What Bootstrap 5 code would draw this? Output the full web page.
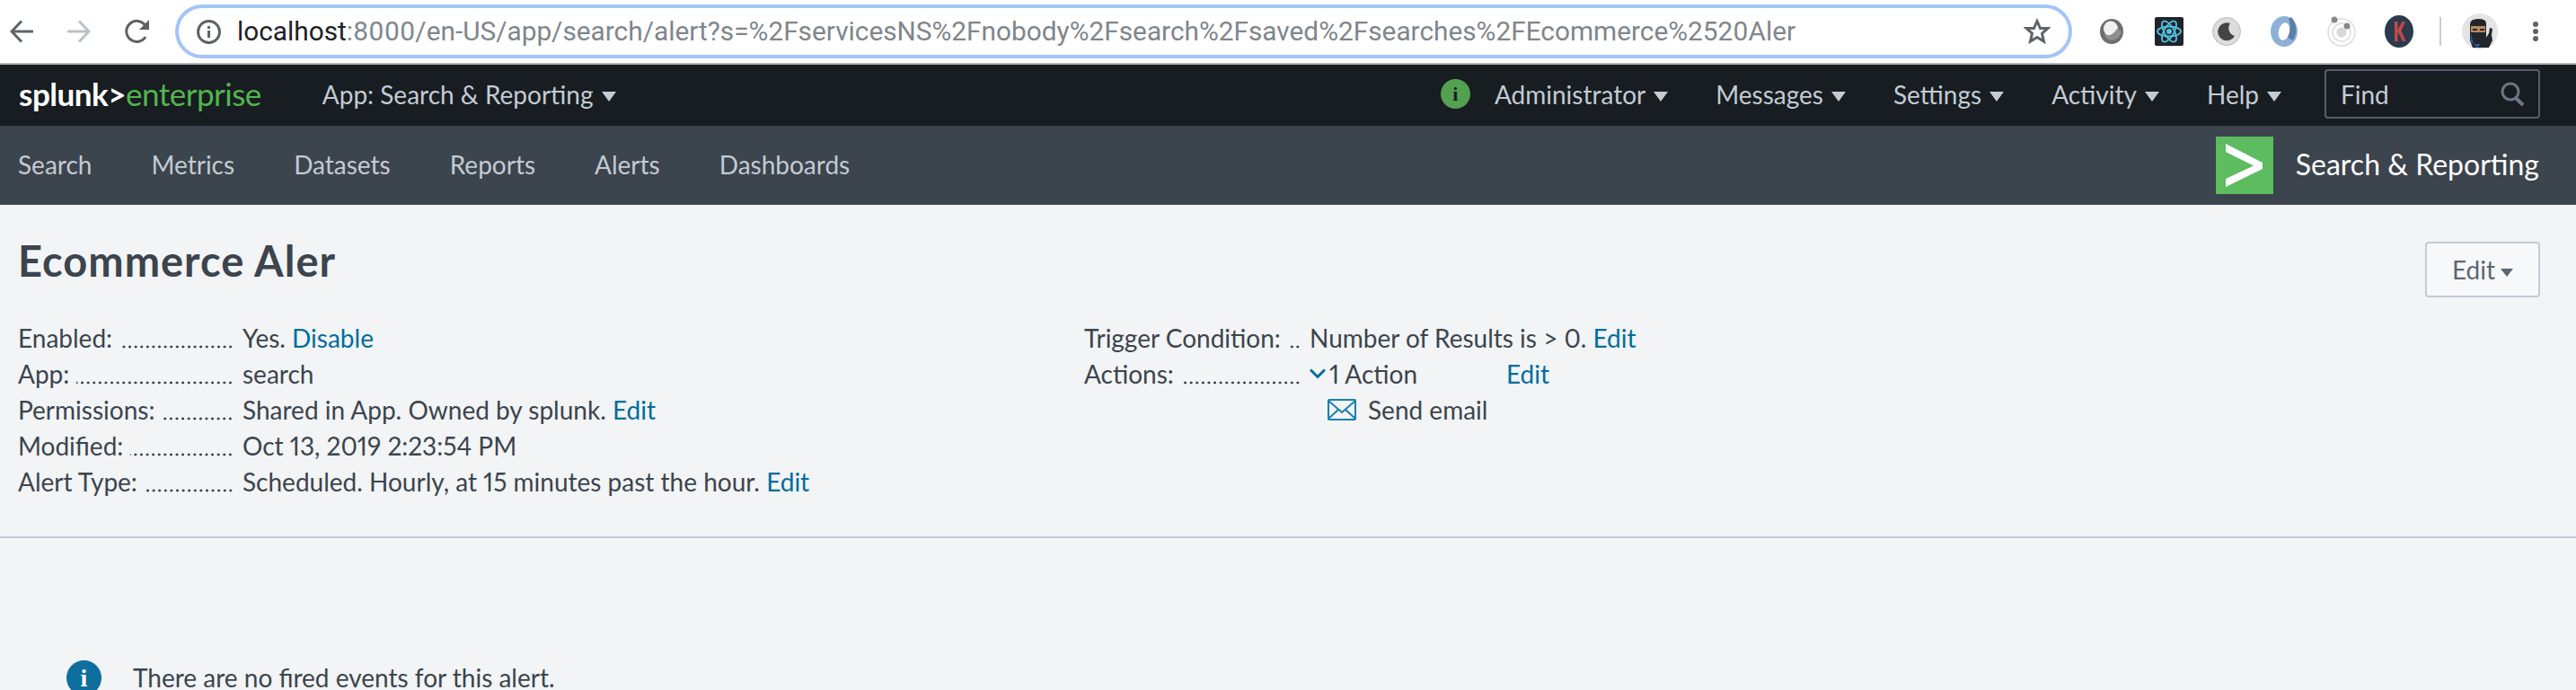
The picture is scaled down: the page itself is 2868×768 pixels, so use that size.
<!DOCTYPE html>
<html lang="en">
<head>
  <meta charset="UTF-8">
  <meta name="viewport" content="width=device-width, initial-scale=1">
  <title>Ecommerce Aler</title>
  <link href="https://cdn.jsdelivr.net/npm/bootstrap@5.3.3/dist/css/bootstrap.min.css" rel="stylesheet">
  <style>
    html, body { height: 100%; }
    body {
      background: #f2f4f5;
      color: #3c444d;
      font-family: "Lato", "Liberation Sans", sans-serif;
      font-size: 28px;
      line-height: 40px;
      font-variant-numeric: proportional-nums;
      overflow: hidden;
    }
    svg { display: block; flex: none; }
    a { text-decoration: none; }

    /* browser chrome */
    .chrome-bar {
      height: 72px;
      background: #fff;
      border-bottom: 2px solid #b4b6b8;
      padding-left: 11px;
    }
    .chrome-nav { width: 184px; gap: 38px; }
    .url-box {
      width: 2112px;
      height: 60px;
      border: 4px solid #a3c5f8;
      border-radius: 30px;
      padding: 0 20px;
      margin-right: 28px;
      font-family: "Roboto", sans-serif;
      font-size: 29.8px;
      color: #80868b;
      white-space: nowrap;
    }
    .url-box b { font-weight: 400; color: #202124; }
    .url-text { margin-left: 18px; flex: 1; overflow: hidden; }
    .ext-group { gap: 32px; }
    .ext-sep { width: 2px; height: 32px; background: #ccc; margin: 0 -9px 0 -3px; }
    .ext-more { margin-left: 6px; }

    /* splunk top bar */
    .top-bar {
      height: 68px;
      background: #171d21;
      padding: 0 40px 3px 21px;
      flex-wrap: nowrap;
    }
    .brand-text {
      font-size: 35px;
      letter-spacing: -.5px;
      color: #53b54f;
      margin-right: 68px;
      padding: 0;
      line-height: 65px;
    }
    .brand-text b { color: #fff; font-weight: 700; }
    .top-link {
      color: #c3cbd4;
      padding: 0;
      margin-left: 53px;
    }
    .top-link:hover { color: #fff; }
    .top-link.dropdown-toggle::after {
      border-top: 11px solid;
      border-left: 8px solid transparent;
      border-right: 8px solid transparent;
      border-bottom: 0;
      margin-left: 9px;
      vertical-align: 3px;
    }
    .app-link { margin-left: 0; }
    .status-dot {
      width: 33px;
      height: 33px;
      border-radius: 50%;
      background: #53a051;
      color: #171d21;
      font-family: "Liberation Serif", serif;
      font-weight: 700;
      font-size: 22px;
      line-height: 33px;
      text-align: center;
      margin-right: -26px;
    }
    .find-box {
      width: 240px;
      height: 55px;
      margin-left: 48px;
      border: 2px solid #56606b;
      border-radius: 4px;
      padding: 0 14px 0 16px;
      color: #c3cbd4;
    }

    /* app bar */
    .app-bar {
      height: 88px;
      background: #3c444d;
      padding: 0 41px 0 20px;
    }
    .app-menu { gap: 66px; margin-bottom: 3px; }
    .app-menu .nav-link { color: #c3cbd4; padding: 0; }
    .app-logo {
      width: 64px;
      height: 64px;
      background: #5cbc5f;
      margin-right: 25px;
    }
    .app-title { color: #fff; font-size: 32px; margin-bottom: 3px; }

    /* alert page */
    .alert-head { padding: 0 40px 0 20px; }
    .alert-title {
      font-size: 47px;
      font-weight: 700;
      letter-spacing: 1px;
      line-height: 60px;
      margin: 32px 0 36px;
      color: #3c444d;
    }
    .edit-btn {
      width: 128px;
      height: 62px;
      margin-top: 41px;
      padding: 0;
      font-size: 28px;
      color: #5c6773;
      background: #f7f8fa;
      border: 2px solid #c3cbd4;
      border-radius: 4px;
    }
    .edit-btn.dropdown-toggle::after {
      border-top: 9px solid;
      border-left: 7px solid transparent;
      border-right: 7px solid transparent;
      border-bottom: 0;
      margin-left: 6px;
      vertical-align: 3px;
    }
    .info-cols { padding-left: 20px; }
    .info-left { width: 1187px; }
    .info-row { display: flex; height: 40px; white-space: nowrap; }
    .info-label { display: flex; width: 240px; margin-right: 10px; flex: none; }
    .info-right .info-label { width: 241px; }
    /* dot leader after each label */
    .dot-leader {
      flex: 1;
      height: 4px;
      margin: 28px 0 0 8px;
      background: radial-gradient(circle, #3c444d 1.300px, transparent 1.700px) right top / 6.600px 4px repeat-x;
    }
    .link-blue { color: #006d9c; }
    .action-edit { margin-left: 99px; }
    .action-sub { margin-left: 271px; gap: 13px; }
    .head-rule { height: 2px; background: #c3cbd4; margin-top: 41px; }

    .empty-note { margin: 135px 0 0 74px; gap: 35px; }
    .note-icon {
      width: 39px;
      height: 39px;
      border-radius: 50%;
      background: #0e6e9e;
      color: #fff;
      font-family: "Liberation Serif", serif;
      font-weight: 700;
      font-size: 28px;
      line-height: 39px;
      text-align: center;
    }
  </style>
</head>
<body>

  <!-- browser toolbar -->
  <div class="chrome-bar d-flex align-items-center">
    <div class="chrome-nav d-flex align-items-center">
      <svg width="26" height="26" viewBox="0 0 26 26" fill="none" stroke="#5f6368" stroke-width="3"><path d="M26 13H2M13 1.500 2 13l11 11.500"/></svg>
      <svg width="26" height="26" viewBox="0 0 26 26" fill="none" stroke="#bdc1c6" stroke-width="3"><path d="M0 13h24M13 1.500 24 13 13 24.500"/></svg>
      <svg width="28" height="28" viewBox="0 0 28 28" fill="none"><path d="M23 20a11.500 11.500 0 1 1-.500-13" stroke="#5f6368" stroke-width="3"/><path d="M27 1v11H16z" fill="#5f6368"/></svg>
    </div>
    <div class="url-box d-flex align-items-center">
      <svg width="27" height="27" viewBox="0 0 27 27" fill="none"><circle cx="13.500" cy="13.500" r="12" stroke="#5f6368" stroke-width="3"/><path d="M13.500 12v8M13.500 7v3" stroke="#5f6368" stroke-width="3"/></svg>
      <div class="url-text"><b>localhost</b>:8000/en-US/app/search/alert?s=%2FservicesNS%2Fnobody%2Fsearch%2Fsaved%2Fsearches%2FEcommerce%2520Aler</div>
      <svg width="30" height="30" viewBox="0 0 30 30" fill="none" stroke="#5f6368" stroke-width="3" stroke-linejoin="miter"><path d="m15 3.500 3.500 8h8.500l-6.500 5.700 2 8.800-7.500-4.600L7.500 26l2-8.800L3 11.500h8.500z"/></svg>
    </div>
    <div class="ext-group d-flex align-items-center">
      <svg width="32" height="34" viewBox="0 0 32 34"><ellipse cx="16" cy="17" rx="13" ry="14" fill="#6e6e6e"/><ellipse cx="15" cy="14" rx="8" ry="8.500" fill="#f1f1f1"/><path d="M8 20q8 4 14-6l5 3q-2 9-11 10-6 0-8-7z" fill="#8f8f8f"/></svg>
      <svg width="32" height="32" viewBox="0 0 32 32" fill="none" stroke="#53c1de" stroke-width="1.800"><rect width="32" height="32" rx="2" fill="#20232a" stroke="none"/><circle cx="16" cy="16" r="3" fill="#53c1de" stroke="none"/><ellipse cx="16" cy="16" rx="13" ry="5.500"/><ellipse cx="16" cy="16" rx="13" ry="5.500" transform="rotate(60 16 16)"/><ellipse cx="16" cy="16" rx="13" ry="5.500" transform="rotate(120 16 16)"/></svg>
      <svg width="32" height="32" viewBox="0 0 32 32"><circle cx="16" cy="16" r="15.500" fill="#dcdcdc" stroke="#bbb"/><path d="M20 7a10 10 0 1 0 5 14 9 9 0 0 1-5-14z" fill="#444"/></svg>
      <svg width="32" height="36" viewBox="0 0 32 36"><ellipse cx="16" cy="18" rx="15" ry="17" fill="#8fb0d6"/><ellipse cx="16" cy="18" rx="6" ry="10" fill="#fff" transform="rotate(12 16 18)"/><path d="M24 2c6 6 7 18 2 26l-6-3c3-7 4-14 1-21z" fill="#5b7ea8"/></svg>
      <svg width="32" height="36" viewBox="0 0 32 36" fill="none"><circle cx="16" cy="19" r="15" stroke="#ddd" stroke-width="1.500"/><circle cx="16" cy="19" r="10" stroke="#ddd" stroke-width="1.500"/><circle cx="16" cy="19" r="5.500" fill="#d8d8d8"/><circle cx="8" cy="5" r="3.500" fill="#888"/><circle cx="22" cy="12" r="3.500" fill="#888"/></svg>
      <svg width="32" height="36" viewBox="0 0 32 36"><ellipse cx="16" cy="18" rx="16" ry="18" fill="#2b3a4d"/><path d="M11 7h3.500v9l5-9H23l-4.500 10L23.500 29H20l-5.500-11v11H11z" fill="#c04848"/></svg>
      <div class="ext-sep"></div>
      <svg width="40" height="40" viewBox="0 0 40 40"><circle cx="20" cy="20" r="20" fill="#e4e4e4"/><path d="M9 12q0-6 9-6t9 5v17l-2 10H12l-3-8z" fill="#23262c"/><path d="M10 14h16v7H10z" fill="#b98a5c"/><path d="M12 17h5v2h-5zM20 17h5v2h-5z" fill="#23262c"/><path d="M25 30l5-8 1-6 3 1-1 7 1 6-4 8h-5z" fill="#23262c"/><path d="M10 22l3 12-3-2zM13 34h8l-4 4z" fill="#2b5aa8"/></svg>
      <svg class="ext-more" width="8" height="24" viewBox="0 0 8 24" fill="#5f6368"><circle cx="4" cy="4" r="3"/><circle cx="4" cy="12" r="3"/><circle cx="4" cy="20" r="3"/></svg>
    </div>
  </div>

  <!-- splunk bar -->
  <nav class="navbar top-bar">
    <a class="navbar-brand brand-text" href="#"><b>splunk&gt;</b>enterprise</a>
    <a class="top-link app-link dropdown-toggle" href="#">App: Search &amp; Reporting</a>
    <div class="d-flex align-items-center ms-auto">
      <div class="status-dot">i</div>
      <a class="top-link dropdown-toggle" href="#">Administrator</a>
      <a class="top-link dropdown-toggle" href="#">Messages</a>
      <a class="top-link dropdown-toggle" href="#">Settings</a>
      <a class="top-link dropdown-toggle" href="#">Activity</a>
      <a class="top-link dropdown-toggle" href="#">Help</a>
      <div class="find-box d-flex align-items-center justify-content-between">
        <span>Find</span>
        <svg width="28" height="28" viewBox="0 0 28 28" fill="none" stroke="#6b7785" stroke-width="3"><circle cx="11" cy="11" r="9"/><path d="m17 18 8 8" stroke-width="4"/></svg>
      </div>
    </div>
  </nav>

  <!-- app nav -->
  <div class="app-bar d-flex align-items-center justify-content-between">
    <ul class="nav app-menu">
      <li class="nav-item"><a class="nav-link" href="#">Search</a></li>
      <li class="nav-item"><a class="nav-link" href="#">Metrics</a></li>
      <li class="nav-item"><a class="nav-link" href="#">Datasets</a></li>
      <li class="nav-item"><a class="nav-link" href="#">Reports</a></li>
      <li class="nav-item"><a class="nav-link" href="#">Alerts</a></li>
      <li class="nav-item"><a class="nav-link" href="#">Dashboards</a></li>
    </ul>
    <div class="d-flex align-items-center">
      <div class="app-logo d-flex align-items-center justify-content-center">
        <svg width="42" height="48" viewBox="0 0 42 48" fill="#fff"><path d="M0 0 41 21v7L0 48v-9L31 24.500 0 9z"/></svg>
      </div>
      <div class="app-title">Search &amp; Reporting</div>
    </div>
  </div>

  <!-- alert header -->
  <div class="alert-head d-flex justify-content-between align-items-start">
    <h2 class="alert-title">Ecommerce Aler</h2>
    <button class="btn edit-btn dropdown-toggle" type="button">Edit</button>
  </div>

  <div class="info-cols d-flex">
    <div class="info-left">
      <div class="info-row"><div class="info-label"><span>Enabled:</span><span class="dot-leader"></span></div><div>Yes. <a class="link-blue" href="#">Disable</a></div></div>
      <div class="info-row"><div class="info-label"><span>App:</span><span class="dot-leader"></span></div><div>search</div></div>
      <div class="info-row"><div class="info-label"><span>Permissions:</span><span class="dot-leader"></span></div><div>Shared in App. Owned by splunk. <a class="link-blue" href="#">Edit</a></div></div>
      <div class="info-row"><div class="info-label"><span>Modified:</span><span class="dot-leader"></span></div><div>Oct 13, 2019 2:23:54 PM</div></div>
      <div class="info-row"><div class="info-label"><span>Alert Type:</span><span class="dot-leader"></span></div><div>Scheduled. Hourly, at 15 minutes past the hour. <a class="link-blue" href="#">Edit</a></div></div>
    </div>
    <div class="info-right">
      <div class="info-row"><div class="info-label"><span>Trigger Condition:</span><span class="dot-leader"></span></div><div>Number of Results is &gt; 0. <a class="link-blue" href="#">Edit</a></div></div>
      <div class="info-row"><div class="info-label"><span>Actions:</span><span class="dot-leader"></span></div>
        <div class="d-flex align-items-center">
          <svg class="me-1" width="18" height="12" viewBox="0 0 18 12" fill="none" stroke="#006d9c" stroke-width="3"><path d="m1 1.500 8 8 8-8"/></svg>
          <span>1 Action</span>
          <a class="link-blue action-edit" href="#">Edit</a>
        </div>
      </div>
      <div class="action-sub d-flex align-items-center">
        <svg width="32" height="24" viewBox="0 0 32 24" fill="none" stroke="#1a7fb0" stroke-width="2"><rect x="1" y="1" width="30" height="22" rx="1"/><path d="m1 2 15 13L31 2M1 22l11-10M31 22 20 12"/></svg>
        <span>Send email</span>
      </div>
    </div>
  </div>

  <div class="head-rule"></div>

  <div class="empty-note d-flex align-items-center">
    <div class="note-icon">i</div>
    <div>There are no fired events for this alert.</div>
  </div>

</body>
</html>
